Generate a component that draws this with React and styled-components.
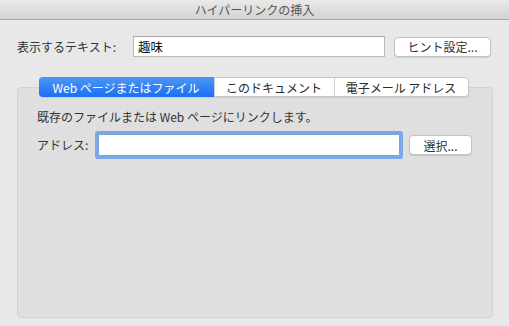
import React from 'react';
import styled, { createGlobalStyle } from "styled-components";

const GlobalStyle = createGlobalStyle`
    html, body {
        margin: 0;
        padding: 0;
        background: #e8e8e8;
    }
    * {
        box-sizing: border-box;
    }
`;

const Window = styled.div`
    width: 509px;
    height: 326px;
    display: flex;
    flex-direction: column;
    background: #e8e8e8;
    font-family: "Noto Sans CJK JP", "Liberation Sans", sans-serif;
    font-size: 12px;
    color: #333;
    overflow: hidden;
`;

const TitleBar = styled.div`
    height: 20px;
    flex: none;
    display: flex;
    align-items: center;
    justify-content: center;
    background: linear-gradient(#e9e9e9, #d3d3d3);
    border-bottom: 1px solid #a9a9a9;
    color: #555;
    font-size: 12px;
`;

const TextRow = styled.div`
    display: flex;
    align-items: center;
    margin-top: 16px;
    padding-left: 17px;
`;

const Label = styled.span`
    width: ${p => p.width}px;
    flex: none;
    line-height: 16px;
`;

const TextInput = styled.div`
    height: ${p => p.height || 21}px;
    width: ${p => p.width}px;
    background: #fff;
    border: 1px solid #b9b9b9;
    border-top-color: #a6a6a6;
    display: flex;
    align-items: center;
    padding: 0 4px;
    font-size: 12.5px;
    color: #111;

    ${p => p.focused && `
        border: 1px solid #7da2d8;
        border-radius: 1px;
        box-shadow: 0 0 0 3px #7aa6ea;
    `}
`;

const Button = styled.div`
    height: 20px;
    width: ${p => p.width}px;
    margin-left: ${p => p.gap}px;
    background: #fff;
    border: 1px solid #c2c2c2;
    border-radius: 4px;
    box-shadow: 0 1px 1px rgba(0, 0, 0, 0.12);
    display: flex;
    align-items: center;
    justify-content: center;
    color: #333;
`;

const TabArea = styled.div`
    flex: 1;
    display: flex;
    flex-direction: column;
    margin: 20px 16px 8px 17px;
`;

const Tabs = styled.div`
    position: relative;
    z-index: 1;
    align-self: center;
    display: flex;
    height: 20px;
    margin-right: 3px;
    background: #fff;
    border: 1px solid #c6c6c6;
    border-radius: 4px;
    box-shadow: 0 1px 1px rgba(0, 0, 0, 0.08);
`;

const Tab = styled.div`
    width: ${p => p.width}px;
    display: flex;
    align-items: center;
    justify-content: center;
    border-left: ${p => (p.first ? "none" : "1px solid #cfcfcf")};
    color: ${p => (p.active ? "#fff" : "#2a2a2a")};
    font-weight: 400;
    background: ${p => (p.active ? "linear-gradient(#4c97f8, #1b6ff2)" : "transparent")};
    margin: ${p => (p.active ? "-1px 0 -1px -1px" : "0")};
    border-radius: ${p => (p.active ? "4px 0 0 4px" : "0")};
`;

const Panel = styled.div`
    flex: 1;
    margin-top: -10px;
    background: #dfdfdf;
    border: 1px solid #d3d3d3;
    border-radius: 4px;
    padding: 21px 19px 0;
`;

const Note = styled.div`
    line-height: 16px;
`;

const AddressRow = styled.div`
    display: flex;
    align-items: center;
    margin-top: 9px;
`;

const App = () => {
    return (
        <>
            <GlobalStyle />
            <Window>
                <TitleBar>ハイパーリンクの挿入</TitleBar>
                <TextRow>
                    <Label width={116}>表示するテキスト:</Label>
                    <TextInput width={252}>趣味</TextInput>
                    <Button width={97} gap={9}>ヒント設定...</Button>
                </TextRow>
                <TabArea>
                    <Tabs>
                        <Tab first active width={175}>Web ページまたはファイル</Tab>
                        <Tab width={120}>このドキュメント</Tab>
                        <Tab width={134}>電子メール アドレス</Tab>
                    </Tabs>
                    <Panel>
                        <Note>既存のファイルまたは Web ページにリンクします。</Note>
                        <AddressRow>
                            <Label width={61}>アドレス:</Label>
                            <TextInput focused width={302} height={22} />
                            <Button width={63} gap={9}>選択...</Button>
                        </AddressRow>
                    </Panel>
                </TabArea>
            </Window>
        </>
    );
};

export default App;
